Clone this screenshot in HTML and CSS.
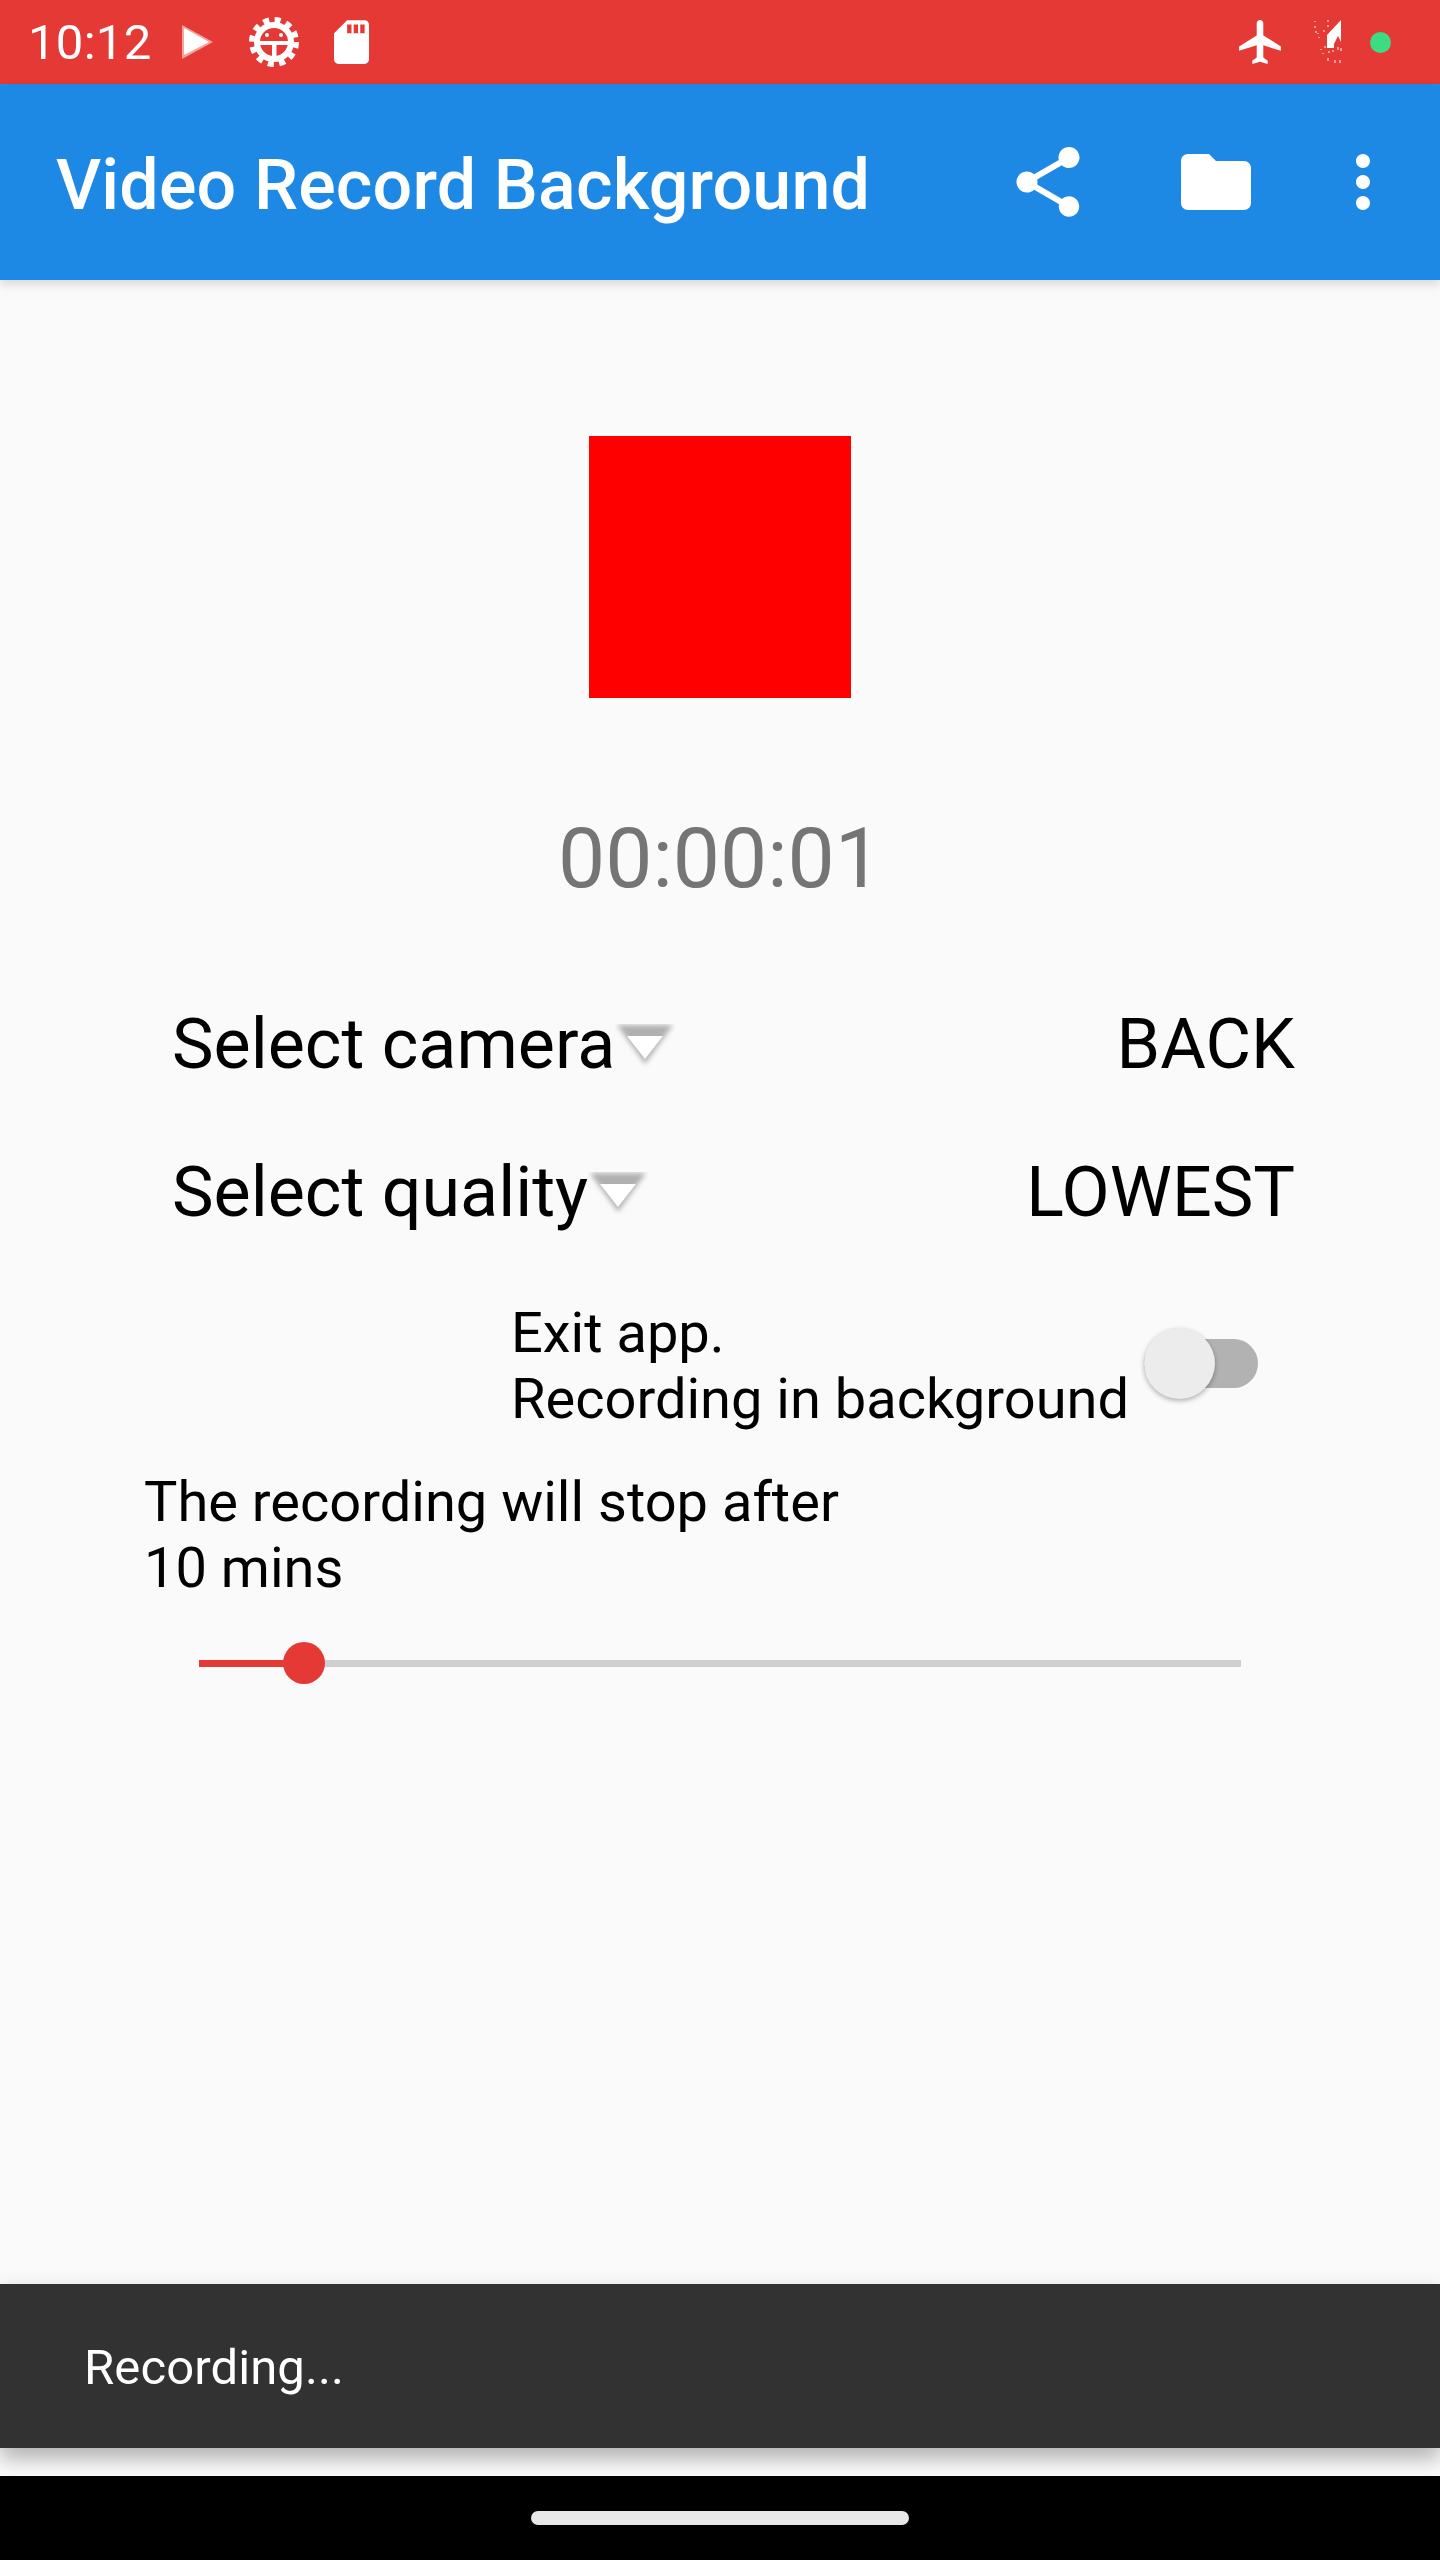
FILE: index.html
```html
<!DOCTYPE html>
<html lang="en">

<head>
    <meta charset="UTF-8">
    <title>Video Record Background</title>
    <link rel="stylesheet" href="styles.css">
</head>

<body>
    <div class="page">
        <div class="status-bar">
            <span class="clock">10:12</span>
            <svg class="icon-play" viewBox="0 0 32 36">
                <polygon points="1,1 32,18 1,35" fill="#f5a3a0"></polygon>
                <polygon points="3,4 28,18 3,31" fill="#fff"></polygon>
            </svg>
            <svg class="icon-gear" viewBox="0 0 50 50">
                <circle cx="25" cy="25" r="22" fill="none" stroke="#fff" stroke-width="6" stroke-dasharray="6 5.52"></circle>
                <circle cx="25" cy="25" r="17" fill="none" stroke="#fff" stroke-width="6"></circle>
                <rect x="8" y="24" width="34" height="4" fill="#fff"></rect>
                <rect x="23" y="24" width="4.5" height="18" fill="#fff"></rect>
                <circle cx="18" cy="18" r="2" fill="#fff"></circle>
                <circle cx="32" cy="18" r="2" fill="#fff"></circle>
            </svg>
            <svg class="icon-sd" viewBox="4 2 16 20">
                <path d="M18 2h-8L4.02 8 4 20c0 1.1.9 2 2 2h12c1.1 0 2-.9 2-2V4c0-1.1-.9-2-2-2zm-6 6h-2V4h2v4zm3 0h-2V4h2v4zm3 0h-2V4h2v4z" fill="#fff"></path>
            </svg>
            <div class="status-right">
                <svg class="icon-plane" viewBox="2 2 19 20">
                    <path d="M21 16v-2l-8-5V3.5c0-.83-.67-1.5-1.5-1.5S10 2.67 10 3.5V9l-8 5v2l8-2.5V19l-2 1.5V22l3.5-1 3.5 1v-1.5L13 19v-5.5l8 2.5z" fill="#fff"></path>
                </svg>
                <svg class="icon-signal" viewBox="0 0 28 48">
                    <polygon points="27,2 27,24 24,18 20,26 20,30 13,30 13,17" fill="#fff"></polygon>
                    <path d="M1 3v1M1 8v2M2 13v2M4 15v1M14 2v2M14 7v2M10 12v2M7 31v1M11 28v2M15 33v2M19 32v2M24 29v3M27 30v3M14 40v3M21 42v3M26 42v3M5 19v1M9 35v1" stroke="#fff" stroke-width="1" fill="none"></path>
                </svg>
                <span class="dot"></span>
            </div>
        </div>

        <div class="app-bar">
            <h1 class="title">Video Record Background</h1>
            <div class="actions">
                <svg class="action" viewBox="0 0 24 24">
                    <path d="M18 16.08c-.76 0-1.44.3-1.96.77L8.91 12.7c.05-.23.09-.46.09-.7s-.04-.47-.09-.7l7.05-4.11c.54.5 1.25.81 2.04.81 1.66 0 3-1.34 3-3s-1.34-3-3-3-3 1.34-3 3c0 .24.04.47.09.7L8.04 9.81C7.5 9.31 6.79 9 6 9c-1.66 0-3 1.34-3 3s1.34 3 3 3c.79 0 1.5-.31 2.04-.81l7.12 4.16c-.05.21-.08.43-.08.65 0 1.61 1.31 2.92 2.92 2.92 1.61 0 2.92-1.31 2.92-2.92s-1.31-2.92-2.92-2.92z"></path>
                </svg>
                <svg class="action" viewBox="0 0 24 24">
                    <path d="M10 4H4c-1.1 0-1.99.9-1.99 2L2 18c0 1.1.9 2 2 2h16c1.1 0 2-.9 2-2V8c0-1.1-.9-2-2-2h-8l-2-2z"></path>
                </svg>
                <svg class="action action-more" viewBox="0 0 24 24">
                    <path d="M12 8c1.1 0 2-.9 2-2s-.9-2-2-2-2 .9-2 2 .9 2 2 2zm0 2c-1.1 0-2 .9-2 2s.9 2 2 2 2-.9 2-2-.9-2-2-2zm0 6c-1.1 0-2 .9-2 2s.9 2 2 2 2-.9 2-2-.9-2-2-2z"></path>
                </svg>
            </div>
        </div>

        <div class="content">
            <div class="record-button"></div>
            <div class="timer">00:00:01</div>

            <div class="select-row">
                <span class="select-label">Select camera</span>
                <svg class="caret" viewBox="0 0 60 44">
                    <polygon class="caret-shade" points="2,1 58,1 30,40"></polygon>
                    <polygon points="12,12 48,12 30,35" fill="#fff"></polygon>
                </svg>
                <span class="select-value">BACK</span>
            </div>
            <div class="select-row">
                <span class="select-label">Select quality</span>
                <svg class="caret" viewBox="0 0 60 44">
                    <polygon class="caret-shade" points="2,1 58,1 30,40"></polygon>
                    <polygon points="12,12 48,12 30,35" fill="#fff"></polygon>
                </svg>
                <span class="select-value">LOWEST</span>
            </div>

            <div class="exit-row">
                <div class="exit-text">Exit app.<br>Recording in background</div>
                <div class="switch">
                    <span class="switch-thumb"></span>
                </div>
            </div>

            <div class="stop-text">The recording will stop after<br>10 mins</div>

            <div class="slider">
                <div class="slider-fill"></div>
                <span class="slider-thumb"></span>
            </div>
        </div>

        <div class="snackbar">Recording...</div>

        <div class="nav-bar">
            <span class="home-pill"></span>
        </div>
    </div>
</body>

</html>
```

FILE: styles.css
```css
body {
    margin: 0;
    background-color: #fafafa;
    font-family: Roboto, sans-serif;
    color: #000;
}

.page {
    display: flex;
    flex-direction: column;
    height: 2560px;
    overflow: hidden;
}

/* status bar */
.status-bar {
    display: flex;
    align-items: center;
    height: 84px;
    padding: 0 49px 0 28px;
    background-color: #e53935;
    color: #fff;
    flex-shrink: 0;
}

.clock {
    font-size: 49px;
    letter-spacing: 0.3px;
    width: 153px;
}

.icon-play {
    width: 32px;
    height: 36px;
}

.icon-gear {
    width: 50px;
    height: 50px;
    margin-left: 36px;
}

.icon-sd {
    width: 35px;
    height: 44px;
    margin-left: 35px;
}

.status-right {
    display: flex;
    align-items: center;
    margin-left: auto;
}

.icon-plane {
    width: 42px;
    height: 44px;
}

.icon-signal {
    width: 28px;
    height: 48px;
    margin-left: 33px;
}

.dot {
    width: 21px;
    height: 21px;
    margin-left: 28px;
    border-radius: 50%;
    background-color: #3ddc84;
}

/* app bar */
.app-bar {
    display: flex;
    align-items: center;
    justify-content: space-between;
    height: 196px;
    padding: 0 35px 0 56px;
    background-color: #1e88e5;
    box-shadow: 0 4px 10px rgba(0, 0, 0, 0.15);
    flex-shrink: 0;
    position: relative;
}

.title {
    margin: 6px 0 0;
    font-size: 70px;
    font-weight: 500;
    letter-spacing: 0.15px;
    color: #fff;
}

.actions {
    display: flex;
    align-items: center;
}

.action {
    width: 84px;
    height: 84px;
    margin-left: 84px;
    fill: #fff;
}

.action-more {
    margin-left: 63px;
}

/* main content */
.content {
    flex: 1;
    display: flex;
    flex-direction: column;
}

.record-button {
    width: 262px;
    height: 262px;
    margin: 156px auto 0;
    background-color: #f00;
}

.timer {
    margin-top: 114px;
    font-size: 84px;
    line-height: 94px;
    text-align: center;
    color: #757575;
}

.select-row {
    display: flex;
    align-items: center;
    height: 148px;
    padding: 0 145px 0 172px;
    font-size: 70px;
}

.timer + .select-row {
    margin-top: 64px;
}

.caret {
    width: 60px;
    height: 44px;
    margin-top: 4px;
}

.caret-shade {
    fill: #b0b0b0;
    filter: blur(2.5px);
}

.select-value {
    margin-left: auto;
}

.exit-row {
    display: flex;
    align-items: center;
    margin-top: 34px;
    padding-left: 511px;
    font-size: 56px;
    line-height: 66px;
}

.switch {
    position: relative;
    width: 114px;
    height: 49px;
    margin: 0 0 6px 15px;
    border-radius: 25px;
    background-color: #b2b2b2;
}

.switch-thumb {
    position: absolute;
    left: 0;
    top: -11px;
    width: 71px;
    height: 71px;
    border-radius: 50%;
    background-color: #ececec;
    box-shadow: 0 2px 5px rgba(0, 0, 0, 0.3);
}

.stop-text {
    margin-top: 37px;
    padding-left: 144px;
    font-size: 56px;
    line-height: 66px;
}

.slider {
    position: relative;
    height: 7px;
    margin: 59px 199px 0;
    background-color: #cfcfcf;
}

.slider-fill {
    width: 105px;
    height: 100%;
    background-color: #e53935;
}

.slider-thumb {
    position: absolute;
    left: 84px;
    top: -18px;
    width: 42px;
    height: 42px;
    border-radius: 50%;
    background-color: #e53935;
}

/* snackbar and nav bar */
.snackbar {
    display: flex;
    align-items: center;
    height: 162px;
    margin-bottom: 28px;
    padding: 2px 0 0 84px;
    background-color: #323232;
    box-shadow: 0 10px 20px rgba(0, 0, 0, 0.3);
    font-size: 49px;
    letter-spacing: 0.1px;
    color: #fff;
    flex-shrink: 0;
}

.nav-bar {
    display: flex;
    align-items: center;
    justify-content: center;
    height: 84px;
    background-color: #000;
    flex-shrink: 0;
    position: relative;
}

.home-pill {
    width: 378px;
    height: 14px;
    border-radius: 7px;
    background-color: #e8e8e8;
}
```
